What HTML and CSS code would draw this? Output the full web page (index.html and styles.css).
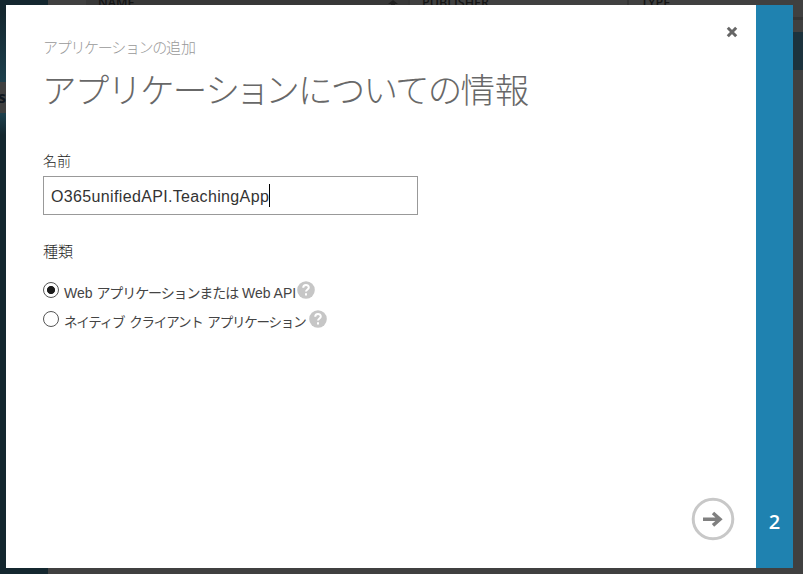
FILE: index.html
```html
<!DOCTYPE html>
<html lang="ja">
<head>
<meta charset="utf-8">
<title>アプリケーションの追加</title>
<link rel="stylesheet" href="styles.css">
</head>
<body>
<div class="backdrop">
  <aside class="nav"><div class="nav-item">s</div></aside>
  <div class="table">
    <div class="table-head">
      <span class="col col-name">NAME<svg class="sort" viewBox="0 0 10 8"><path d="M5 0 10 4H7v4H3V4H0z"/></svg></span>
      <span class="col col-publisher">PUBLISHER</span>
      <span class="col col-type">TYPE</span>
    </div>
    <div class="table-row"></div>
  </div>
</div>
<main class="dialog">
  <section class="panel">
    <svg class="close" viewBox="0 0 12 12"><path d="M1.8 1.8 10.2 10.2M10.2 1.8 1.8 10.2"/></svg>
    <p class="crumb">アプリケーションの<span class="kanji">追加</span></p>
    <h1 class="title">アプリケー<span class="tight">ショ</span>ンについての<span class="kanji">情報</span></h1>
    <label class="label label-name" for="name">名前</label>
    <div class="field"><span class="value">O365unifiedAPI.TeachingApp</span><span class="caret"></span></div>
    <div class="label label-kind">種類</div>
    <div class="option"><span class="radio checked"></span><span class="text text-web">Web <span class="kana">アプリケーションまたは</span> Web API</span><svg class="help" viewBox="0 0 18 18"><circle cx="9" cy="9" r="8.8"/><path d="M6.2 6.8C6.2 3.2 11.8 3.2 11.8 6.5 11.8 8.5 9 8.5 9 10.6M9 12.2v2.2"/></svg></div>
    <div class="option"><span class="radio"></span><span class="text text-native">ネイティブ クライアント アプリケーション</span><svg class="help" viewBox="0 0 18 18"><circle cx="9" cy="9" r="8.8"/><path d="M6.2 6.8C6.2 3.2 11.8 3.2 11.8 6.5 11.8 8.5 9 8.5 9 10.6M9 12.2v2.2"/></svg></div>
    <svg class="next" viewBox="0 0 44 44"><circle cx="22" cy="22" r="19.8"/><path d="M12 22.2H28M22 16l7 6.2-7 6.2"/></svg>
  </section>
  <aside class="steps">2</aside>
</main>
</body>
</html>
```
FILE: styles.css
```css
* { box-sizing: border-box; }
body {
  margin: 0;
  width: 803px;
  height: 574px;
  overflow: hidden;
  position: relative;
  background: #404040;
  font-family: "Noto Sans CJK JP", sans-serif;
  color: #444;
}
.backdrop { display: flex; height: 574px; }
.nav {
  width: 48px;
  padding-top: 82px;
  background: linear-gradient(#14272f 0, #14272f 12px, #1d404d 82px, #1d404d 114px, #14272f 135px);
}
.nav-item {
  height: 31px;
  background: #404040;
  color: #101820;
  font: bold 16px/31px "Open Sans", sans-serif;
  text-indent: -2px;
}
.table { flex: 1; }
.table-head {
  display: flex;
  height: 20px;
  padding-left: 38px;
  border-bottom: 3px solid #353535;
  font: 600 12.5px/14px "Open Sans", sans-serif;
  color: #151515;
}
.col { display: flex; justify-content: space-between; padding: 0 10px 0 12px; margin-top: -4px; border-right: 2px solid #353535; }
.col-name { width: 324px; background: #383838; }
.col-publisher { width: 219px; }
.col-type { border: 0; }
.sort { width: 10px; height: 8px; margin-top: 4px; fill: #202020; }
.table-row { height: 38px; margin-top: 12px; background: #1c323d; }
.dialog {
  position: absolute;
  left: 6px;
  top: 5px;
  width: 787px;
  height: 563px;
  display: flex;
}
.panel { position: relative; width: 750px; padding: 32px 37px 0; background: #fff; }
.steps { width: 37px; padding-top: 503px; background: #1f82b0; color: #fff; font: 600 20px/28px "Open Sans", sans-serif; text-align: center; }
.close { position: absolute; left: 720px; top: 21px; width: 12px; height: 12px; stroke: #666; stroke-width: 3; fill: none; }
.crumb { margin: 0; height: 20px; font-size: 15px; font-weight: 300; line-height: 20px; color: #999; letter-spacing: -1.3px; white-space: nowrap; }
.crumb .kanji { letter-spacing: 0; }
.title { margin: 7px 0 0 -1px; height: 48px; font-size: 34.5px; font-weight: 300; line-height: 48px; color: #686868; letter-spacing: -1.8px; white-space: nowrap; }
.title .tight { letter-spacing: -4.6px; }
.title .kanji { letter-spacing: -0.3px; }
.label { display: block; font-size: 14px; font-weight: 300; line-height: 20px; color: #222; }
.label-name { margin-top: 38px; }
.field {
  display: flex;
  align-items: center;
  width: 375px;
  height: 39px;
  margin-top: 6px;
  padding-left: 7px;
  border: 1px solid #999;
}
.value { font-family: "Liberation Sans", sans-serif; font-size: 16px; line-height: 24px; padding-top: 2px; color: #333; width: 218px; letter-spacing: 0.35px; white-space: nowrap; }
.caret { width: 1px; height: 23px; background: #000; }
.label-kind { margin-top: 26px; margin-bottom: 16px; font-size: 15px; }
.option { display: flex; height: 29px; align-items: flex-start; }
.radio { width: 16px; height: 16px; margin-top: 5px; border: 1px solid #555; border-radius: 50%; }
.radio.checked { background: radial-gradient(circle, #1c1c1c 3.7px, transparent 4.4px); }
.text { margin-left: 5px; margin-top: 5px; font-size: 14px; line-height: 20px; white-space: nowrap; }
.text-web { width: 233px; margin-top: 6px; font-family: "Liberation Sans", "Noto Sans CJK JP", sans-serif; }
.text-web .kana { letter-spacing: -1.1px; }
.text-native { width: 245px; font-size: 13.5px; letter-spacing: -1.2px; word-spacing: 3px; }
.help { width: 18px; height: 18px; margin-top: 4px; fill: #c6c6c6; }
.help path { fill: none; stroke: #fff; stroke-width: 2; }
.next { position: absolute; left: 685px; top: 492px; width: 44px; height: 44px; fill: none; stroke: #c8c8c8; stroke-width: 3; }
.next path { stroke: #808080; stroke-width: 3.5; }
```
